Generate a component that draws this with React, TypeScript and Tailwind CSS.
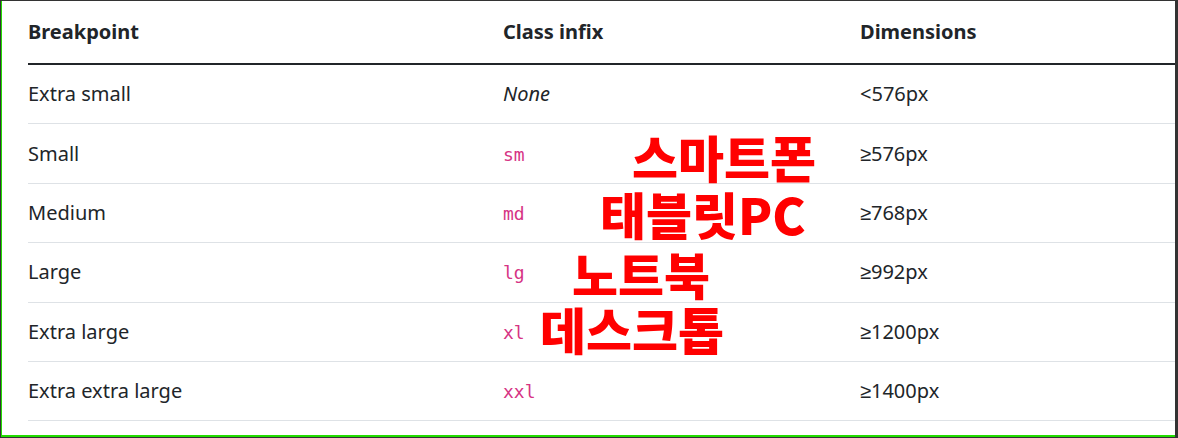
const rows = [
  { name: "Extra small", infix: null, dim: "<576px" },
  { name: "Small", infix: "sm", dim: "≥576px" },
  { name: "Medium", infix: "md", dim: "≥768px" },
  { name: "Large", infix: "lg", dim: "≥992px" },
  { name: "Extra large", infix: "xl", dim: "≥1200px" },
  { name: "Extra extra large", infix: "xxl", dim: "≥1400px" },
];

// red hand-written notes laid over the table
const notes = [
  { text: "스마트폰", cls: "left-[630px] top-[130px]" },
  { text: "태블릿PC", cls: "left-[598px] top-[187px]" },
  { text: "노트북", cls: "left-[570px] top-[247px]" },
  { text: "데스크톱", cls: "left-[538px] top-[302px]" },
];

export default function App() {
  return (
    <div className="w-[1178px] h-[438px] bg-white border-t border-l border-b border-r-[3px] border-[#333333] overflow-hidden">
      <div className="relative h-full border-l border-b-2 border-[#22dd00] pl-[26px] font-['Noto_Sans',sans-serif] text-[20px] text-[#212529]">
        <div className="grid grid-cols-[475px_357px_1fr] h-[64px] items-center border-b-2 border-[#212529] font-bold">
          <div>Breakpoint</div>
          <div>Class infix</div>
          <div>Dimensions</div>
        </div>
        {rows.map((r) => (
          <div
            key={r.name}
            className="grid grid-cols-[475px_357px_1fr] h-[59.4px] items-center border-b border-[#dee2e6]"
          >
            <div>{r.name}</div>
            <div>
              {r.infix ? (
                <code className="font-['DejaVu_Sans_Mono',monospace] text-[18px] text-[#d63384]">{r.infix}</code>
              ) : (
                <em>None</em>
              )}
            </div>
            <div>{r.dim}</div>
          </div>
        ))}
        {notes.map((n) => (
          <span
            key={n.text}
            className={`absolute ${n.cls} font-['Noto_Sans_CJK_KR',sans-serif] font-black text-[50px] leading-none text-[#ff0000]`}
          >
            {n.text}
          </span>
        ))}
      </div>
    </div>
  );
}
